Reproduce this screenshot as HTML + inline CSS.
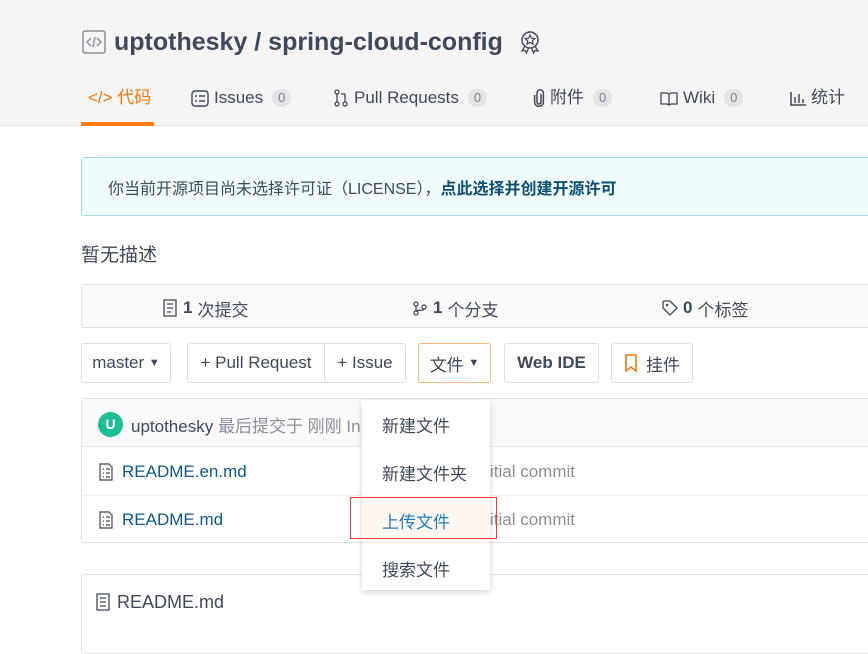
<!DOCTYPE html><html><head><meta charset="utf-8"><style>
*{box-sizing:border-box;margin:0;padding:0}
body{width:868px;height:636px;overflow:hidden;background:#fff;font-family:"Liberation Sans","Noto Sans CJK SC",sans-serif;color:#40485b;position:relative}
.abs{position:absolute}
.hdr{position:absolute;left:0;top:0;width:868px;height:126px;background:#f5f5f5;border-bottom:1px solid #e3e3e3}
.title{left:82px;top:28px;height:28px;font-size:25px;font-weight:bold;color:#40485b;display:flex;align-items:center;gap:8px;white-space:nowrap}
.tab{top:86px;height:24px;font-size:17px;line-height:24px;color:#40485b;display:flex;align-items:center;gap:5px;white-space:nowrap}
.badge{display:inline-block;background:#e2e4e7;color:#7a8190;border-radius:10px;font-size:13px;line-height:18px;padding:0 6px;margin-left:4px}
.box{border:1px solid #dfe3e8;border-radius:3px}
.btn{position:absolute;top:343px;height:40px;border:1px solid #dcdfe4;border-radius:3px;font-size:17px;display:flex;align-items:center;justify-content:center;background:#fff;white-space:nowrap}
.row{position:absolute;left:82px;width:800px;height:24px;font-size:17px;display:flex;align-items:center}
.dd div{height:48px;display:flex;align-items:center;padding-left:20px;font-size:17px;color:#40485b}
.stat{position:absolute;top:296px;height:24px;font-size:17px;display:flex;align-items:center;gap:5px}
</style></head><body>
<div class="hdr"></div>
<div class="abs title"><svg width="24" height="24" viewBox="0 0 24 24"><rect x="1" y="1" width="22" height="22" rx="2" fill="none" stroke="#8a8f9a" stroke-width="1.5"/><path d="M9 8l-4 4 4 4M15 8l4 4-4 4M13 7l-2 10" fill="none" stroke="#8a8f9a" stroke-width="1.4"/></svg>uptothesky / spring-cloud-config <svg width="26" height="26" viewBox="0 0 26 26" style="margin-left:6px"><circle cx="13" cy="11" r="8" fill="none" stroke="#40485b" stroke-width="1.5"/><path d="M13 6l1.5 3.2 3.3.4-2.5 2.3.7 3.3-3-1.7-3 1.7.7-3.3-2.5-2.3 3.3-.4z" fill="none" stroke="#40485b" stroke-width="1.2"/><path d="M8 17l-3 5 3-.5 1.5 2.5 2-5M18 17l3 5-3-.5-1.5 2.5-2-5" fill="none" stroke="#40485b" stroke-width="1.3"/></svg></div>
<div class="abs tab" style="left:88px;color:#f5760c">&lt;/&gt; 代码</div>
<div class="abs" style="left:81px;top:122px;width:73px;height:4px;background:#fb7a14"></div>
<div class="abs tab" style="left:191px"><svg width="18" height="17"><rect x="1" y="1" width="16" height="15" rx="3" fill="none" stroke="#40485b" stroke-width="1.4"/><path d="M4 6h2M8 6h6M4 11h2M8 11h6" stroke="#40485b" stroke-width="1.4"/></svg>Issues <span class="badge">0</span></div>
<div class="abs tab" style="left:333px"><svg width="16" height="18"><circle cx="4" cy="3" r="2" fill="none" stroke="#40485b" stroke-width="1.3"/><circle cx="4" cy="15" r="2" fill="none" stroke="#40485b" stroke-width="1.3"/><circle cx="12" cy="15" r="2" fill="none" stroke="#40485b" stroke-width="1.3"/><path d="M4 5v8M12 13V5H8" fill="none" stroke="#40485b" stroke-width="1.3"/></svg>Pull Requests <span class="badge">0</span></div>
<div class="abs tab" style="left:533px"><svg width="12" height="18" viewBox="0 0 12 18"><path d="M8 5v8a2 2 0 01-4 0V4a3.2 3.2 0 016.4 0v9a4.4 4.4 0 01-8.8 0V6" fill="none" stroke="#40485b" stroke-width="1.5"/></svg>附件 <span class="badge">0</span></div>
<div class="abs tab" style="left:660px"><svg width="18" height="15"><path d="M1 2h6l2 1 2-1h6v11h-6l-2 1-2-1H1z M9 3v11" fill="none" stroke="#40485b" stroke-width="1.3"/></svg>Wiki <span class="badge">0</span></div>
<div class="abs tab" style="left:790px"><svg width="16" height="15"><path d="M1 1v13h15M5 12V6M9 12V3M13 12V8" fill="none" stroke="#40485b" stroke-width="1.5"/></svg>统计</div>

<div class="abs" style="left:81px;top:157px;width:800px;height:59px;background:#f0fbfb;border:1px solid #a6dbe0;border-radius:3px;padding:0 26px;display:flex;align-items:center;font-size:16px;color:#40485b">你当前开源项目尚未选择许可证（LICENSE），<b style="color:#0f4f72">点此选择并创建开源许可</b></div>
<div class="abs" style="left:81px;top:240px;font-size:19px">暂无描述</div>

<div class="abs box" style="left:81px;top:284px;width:800px;height:44px;background:#fafafa"></div>
<div class="stat" style="left:162px"><svg width="16" height="18"><path d="M2 1h12v16H2z M5 5h6M5 9h6M5 13h4" fill="none" stroke="#40485b" stroke-width="1.3"/></svg><b>1</b> 次提交</div>
<div class="stat" style="left:412px"><svg width="16" height="16"><circle cx="4" cy="4" r="2" fill="none" stroke="#40485b" stroke-width="1.3"/><circle cx="4" cy="13" r="2" fill="none" stroke="#40485b" stroke-width="1.3"/><circle cx="12" cy="7" r="2" fill="none" stroke="#40485b" stroke-width="1.3"/><path d="M4 6v5M12 9c0 2-8 1-8 2" fill="none" stroke="#40485b" stroke-width="1.3"/></svg><b>1</b> 个分支</div>
<div class="stat" style="left:662px"><svg width="16" height="16"><path d="M1 2v6l7 7 7-7-7-7H2z" fill="none" stroke="#40485b" stroke-width="1.3"/><circle cx="5" cy="5" r="1.3" fill="#40485b"/></svg><b>0</b> 个标签</div>

<div class="btn" style="left:81px;width:90px">master&nbsp;<span style="font-size:11px">▼</span></div>
<div class="btn" style="left:187px;width:138px;border-radius:3px 0 0 3px">+ Pull Request</div>
<div class="btn" style="left:324px;width:82px;border-radius:0 3px 3px 0">+ Issue</div>
<div class="btn" style="left:418px;width:73px;border-color:#fbb77c">文件&nbsp;<span style="font-size:11px">▼</span></div>
<div class="btn" style="left:504px;width:95px;font-weight:bold">Web IDE</div>
<div class="btn" style="left:611px;width:82px"><svg width="14" height="18" style="margin-right:8px"><path d="M2 1h10v16l-5-4-5 4z" fill="none" stroke="#f5760c" stroke-width="1.6"/></svg>挂件</div>

<div class="abs box" style="left:81px;top:398px;width:800px;height:145px"></div>
<div class="abs" style="left:82px;top:399px;width:790px;height:48px;background:#fafafa;border-bottom:1px solid #e3e6ea"></div>
<div class="abs" style="left:82px;top:495px;width:790px;height:1px;background:#eceef1"></div>
<div class="row" style="top:412px"><span style="margin-left:16px;width:25px;height:25px;border-radius:50%;background:#1fbd95;color:#fff;font-size:14px;display:flex;align-items:center;justify-content:center;font-weight:bold">U</span><span style="margin-left:8px">uptothesky <span style="color:#8a8f9a">最后提交于 刚刚 In</span></span></div>
<div class="row" style="top:460px;color:#0f5a8a"><svg width="16" height="18" style="margin:0 8px 0 16px"><path d="M2 1h9l3 3v13H2z M5 6h1M8 6h4M5 10h1M8 10h4M5 14h1M8 14h4" fill="none" stroke="#40485b" stroke-width="1.2"/></svg>README.en.md</div>
<div class="row" style="top:508px;color:#0f5a8a"><svg width="16" height="18" style="margin:0 8px 0 16px"><path d="M2 1h9l3 3v13H2z M5 6h1M8 6h4M5 10h1M8 10h4M5 14h1M8 14h4" fill="none" stroke="#40485b" stroke-width="1.2"/></svg>README.md</div>
<div class="abs" style="left:490px;top:462px;font-size:17px;color:#8a8f9a">itial commit</div>
<div class="abs" style="left:490px;top:510px;font-size:17px;color:#8a8f9a">itial commit</div>

<div class="abs box" style="left:81px;top:574px;width:800px;height:80px"></div>
<div class="abs" style="left:95px;top:590px;height:24px;font-size:18px;display:flex;align-items:center;gap:6px"><svg width="16" height="18"><path d="M2 1h12v16H2z M5 5h6M5 9h6M5 13h6" fill="none" stroke="#40485b" stroke-width="1.3"/></svg>README.md</div>

<div class="abs dd" style="left:362px;top:400px;width:128px;height:190px;background:#fff;box-shadow:0 2px 6px rgba(0,0,0,.18)">
<div>新建文件</div><div>新建文件夹</div><div style="background:#fef6f0;color:#1d7fc1">上传文件</div><div>搜索文件</div></div>
<div class="abs" style="left:350px;top:497px;width:147px;height:42px;border:1px solid #f33"></div>
</body></html>
